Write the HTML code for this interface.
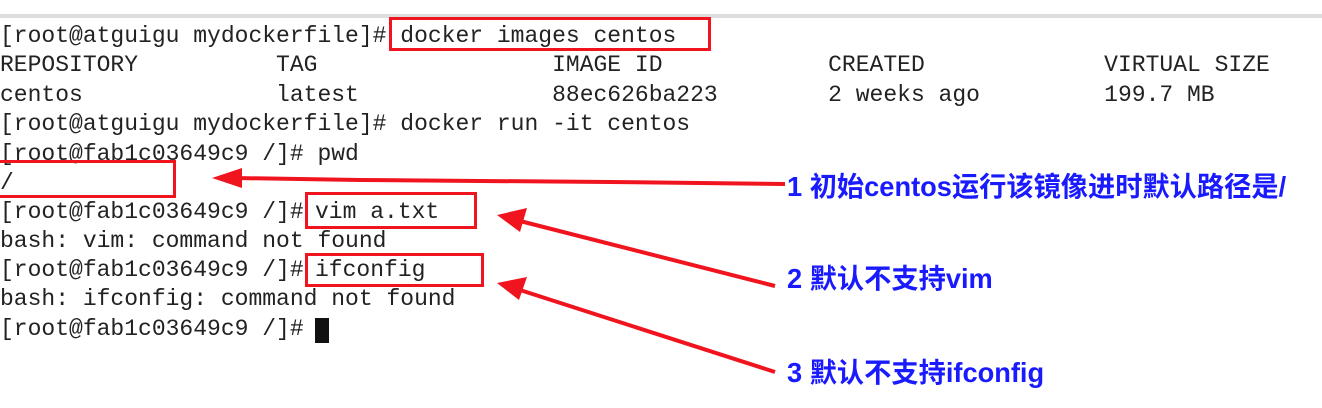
<!DOCTYPE html>
<html><head><meta charset="utf-8"><style>
body{margin:0;width:1322px;height:408px;background:#fff;position:relative;overflow:hidden}
.l{position:absolute;left:0;font-family:"Liberation Mono",monospace;font-size:23px;line-height:28px;color:#222;white-space:pre}
.b{position:absolute;border:3px solid #f0141e;box-sizing:border-box}
.t{position:absolute;font-family:"Liberation Sans","Noto Sans CJK SC",sans-serif;font-size:27.5px;color:#1a1aff;white-space:pre;line-height:30px;font-weight:bold;transform:scaleX(0.99);transform-origin:left}
</style></head><body>
<div style="position:absolute;left:0;top:14px;width:1322px;height:4px;background:#ddd"></div>
<div class="l" style="top:22px">[root@atguigu mydockerfile]# docker images centos</div>
<div class="l" style="top:51px">REPOSITORY          TAG                 IMAGE ID            CREATED             VIRTUAL SIZE</div>
<div class="l" style="top:81px">centos              latest              88ec626ba223        2 weeks ago         199.7 MB</div>
<div class="l" style="top:110px">[root@atguigu mydockerfile]# docker run -it centos</div>
<div class="l" style="top:140px">[root@fab1c03649c9 /]# pwd</div>
<div class="l" style="top:169px">/</div>
<div class="l" style="top:198px">[root@fab1c03649c9 /]#</div><div class="l" style="top:198px;left:315px">vim a.txt</div>
<div class="l" style="top:227px">bash: vim: command not found</div>
<div class="l" style="top:256px">[root@fab1c03649c9 /]#</div><div class="l" style="top:256px;left:315px">ifconfig</div>
<div class="l" style="top:285px">bash: ifconfig: command not found</div>
<div class="l" style="top:315px">[root@fab1c03649c9 /]#</div>
<div style="position:absolute;left:315px;top:318px;width:14px;height:25px;background:#111"></div>
<div class="b" style="left:389px;top:17px;width:322px;height:34px"></div>
<div class="b" style="left:-3px;top:160px;width:179px;height:38px"></div>
<div class="b" style="left:305px;top:192px;width:172px;height:37px"></div>
<div class="b" style="left:305px;top:253px;width:179px;height:34px"></div>
<svg width="1322" height="408" style="position:absolute;left:0;top:0">
<g stroke="#f0141e" stroke-width="4" fill="#f0141e">
<path d="M785 184 L610 182 L360 180 L235 178" fill="none"/>
<polygon points="212,178 242,168 242,188" stroke="none"/>
<path d="M775 286 L520 221" fill="none"/>
<polygon points="497,215 527,208 520,232" stroke="none"/>
<path d="M775 372 L520 290" fill="none"/>
<polygon points="497,283 527,277 519,300" stroke="none"/>
</g></svg>
<div class="t" style="top:172px;left:787px">1 初始centos运行该镜像进时默认路径是/</div>
<div class="t" style="top:264px;left:787px">2 默认不支持vim</div>
<div class="t" style="top:358px;left:787px">3 默认不支持ifconfig</div>
</body></html>
